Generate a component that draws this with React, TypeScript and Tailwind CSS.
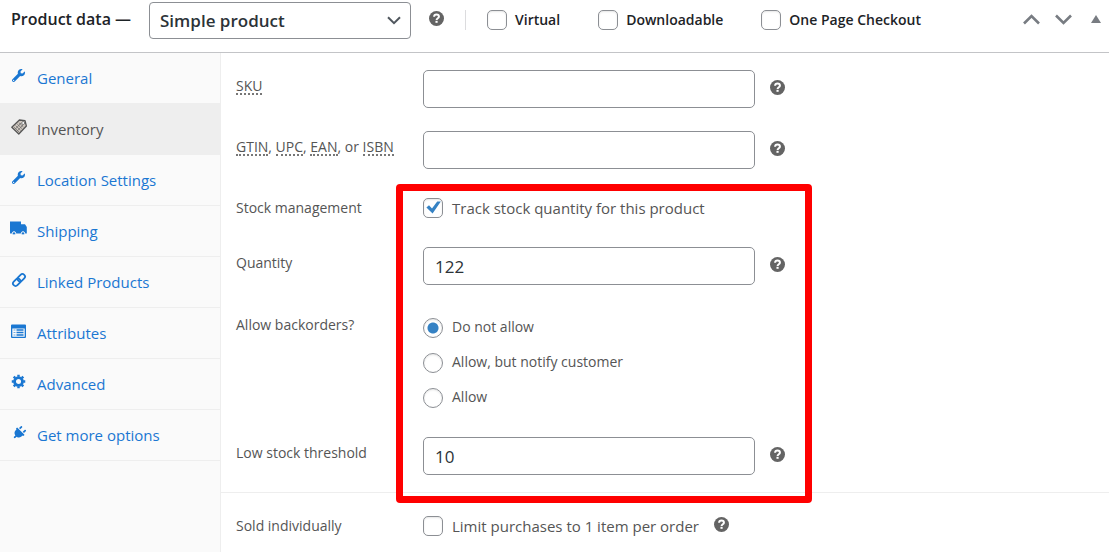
import React, { useState } from 'react';
import { FaWrench, FaPlug } from 'react-icons/fa';

const boxStyle =
  'appearance-none rounded-[5px] border border-[#8c8f94] bg-white size-5 [grid-area:1/1] shadow-[inset_0_1px_2px_rgba(0,0,0,0.1)]';
const inputStyle =
  'h-[38px] w-full max-w-[332px] rounded-[5px] border border-[#8c8f94] bg-white px-[11px] pt-px text-[17px] text-[#2c3338]';
const labelStyle = 'w-[187px] shrink-0 text-[14px] leading-5';

function Help() {
  return (
    <button type="button" aria-label="Help" className="mb-[3px] shrink-0">
      <svg viewBox="0 0 16 16" className="size-[15px]">
        <circle cx="8" cy="8" r="8" fill="#646464" />
        <path d="M5.4 6.1C5.5 4.5 6.5 3.8 8 3.8S10.6 4.6 10.6 6C10.6 7.7 8.1 7.7 8.1 9.5" fill="none" stroke="#fff" strokeWidth="2.1" />
        <rect x="6.9" y="10.5" width="2.3" height="2.1" fill="#fff" />
      </svg>
    </button>
  );
}

function CheckBox({ id, checked = false }: { id: string; checked?: boolean }) {
  const [on, setOn] = useState(checked);
  return (
    <span className="grid size-5 shrink-0 place-items-center">
      <input id={id} type="checkbox" checked={on} onChange={() => setOn(!on)} className={boxStyle} />
      {on && (
        <svg viewBox="0 0 20 20" className="pointer-events-none size-5 [grid-area:1/1]">
          <path d="M3.4 9.6 6 7.3 9 10.4 14.2 3.6 17.8 3.6 9.6 15.6Z" fill="#3582c4" />
        </svg>
      )}
    </span>
  );
}

function InventoryIcon() {
  return (
    <svg viewBox="0 0 16 16" className="size-4">
      <path d="M8.4 1 14 1.6 15.4 7 7.8 15 .8 8.2Z" fill="#d0c8c0" stroke="#555" strokeWidth="1.3" strokeLinejoin="round" />
      <path d="M3 8.2 8 13M4.6 6.6 9.6 11.4M6.2 5 11.2 9.8M7.8 3.6 12.4 8M4.2 10.2 10 4M6.2 12 12.2 5.8" stroke="#666" strokeWidth=".7" fill="none" />
      <circle cx="12.2" cy="4" r="1.5" fill="#fafafa" stroke="#555" strokeWidth=".7" />
    </svg>
  );
}

function TruckIcon() {
  return (
    <svg viewBox="0 0 17 15" className="h-[15px] w-[17px]">
      <path d="M0 .5H11V3.2H15L16.8 6V12.4H0Z" fill="currentColor" />
      <circle cx="4" cy="12.4" r="1.7" fill="currentColor" stroke="#fafafa" />
      <circle cx="13" cy="12.4" r="1.7" fill="currentColor" stroke="#fafafa" />
    </svg>
  );
}

function ChainIcon() {
  return (
    <svg viewBox="0 0 16 16" className="size-4">
      <g fill="none" stroke="currentColor" strokeWidth="1.8" transform="rotate(-45 8 8)">
        <rect x="0.6" y="5.4" width="8.4" height="5.2" rx="2.6" />
        <rect x="7" y="5.4" width="8.4" height="5.2" rx="2.6" />
      </g>
    </svg>
  );
}

function AttributesIcon() {
  return (
    <svg viewBox="0 0 15 14" className="h-[14px] w-[15px]">
      <path fillRule="evenodd" d="M1 .5H14Q15 .5 15 1.5V13Q15 14 14 14H1Q0 14 0 13V1.5Q0 .5 1 .5ZM1.3 4.5V12.7H13.7V4.5Z" fill="currentColor" />
      <path d="M2.5 6H4.5M2.5 8.5H4.5M2.5 11H4.5" stroke="currentColor" strokeWidth="1" opacity=".6" />
      <path d="M5.5 6H12.5M5.5 8.5H12.5M5.5 11H12.5" stroke="currentColor" strokeWidth="1.5" />
    </svg>
  );
}

function GearIcon() {
  return (
    <svg viewBox="0 0 16 16" className="size-[15px]">
      <circle cx="8" cy="8" r="4.2" fill="none" stroke="currentColor" strokeWidth="3" />
      <path d="M8 .8V3M8 13V15.2M.8 8H3M13 8H15.2M2.9 2.9 4.5 4.5M11.5 11.5 13.1 13.1M2.9 13.1 4.5 11.5M11.5 4.5 13.1 2.9" stroke="currentColor" strokeWidth="2.6" />
    </svg>
  );
}

const tabs = [
  { name: 'General', icon: <FaWrench className="size-[13px]" /> },
  { name: 'Inventory', icon: <InventoryIcon />, active: true },
  { name: 'Location Settings', icon: <FaWrench className="size-[13px]" /> },
  { name: 'Shipping', icon: <TruckIcon /> },
  { name: 'Linked Products', icon: <ChainIcon /> },
  { name: 'Attributes', icon: <AttributesIcon /> },
  { name: 'Advanced', icon: <GearIcon /> },
  { name: 'Get more options', icon: <FaPlug className="size-[14px] rotate-45" /> },
];

function TextRow({ id, label, value }: { id: string; label: React.ReactNode; value?: string }) {
  return (
    <div className="flex items-start">
      <label htmlFor={id} className={`${labelStyle} pt-[6px]`}>{label}</label>
      <div className="flex flex-1 items-center gap-[15px]">
        <input id={id} type="text" defaultValue={value} className={inputStyle} />
        <Help />
      </div>
    </div>
  );
}

function Abbr({ children }: { children: string }) {
  return <abbr className="border-b-2 border-dotted border-[#777] no-underline inline-block leading-[14px]">{children}</abbr>;
}

export default function App() {
  const [backorders, setBackorders] = useState('Do not allow');
  return (
    <div className="flex min-h-screen flex-col bg-white font-['Open_Sans',sans-serif] text-[#555]">
      <header className="flex h-[53px] shrink-0 items-start border-b border-[#c3c4c7] pl-[11px] pr-[6px] pt-[2px] text-[#1d2327]">
        <div className="flex h-9 items-center">
          <label htmlFor="type" className="w-[138px] pb-[2px] text-[16px] font-semibold whitespace-nowrap">Product data —</label>
          <span className="grid items-center">
            <select id="type" className="h-[37px] w-[262px] appearance-none rounded-[4px] border border-[#8c8f94] bg-white px-[10px] pt-[2px] text-[17px] font-semibold text-[#2c3338] [grid-area:1/1]">
              <option>Simple product</option>
            </select>
            <svg viewBox="0 0 14 9" className="pointer-events-none mr-[10px] h-[9px] w-[14px] justify-self-end [grid-area:1/1]">
              <path d="M1 1.2 7 7.2 13 1.2" fill="none" stroke="#50575e" strokeWidth="2" />
            </svg>
          </span>
          <span className="ml-[18px] flex"><Help /></span>
          <div className="ml-[21px] flex h-5 items-center gap-[38px] border-l border-[#dcdcde] pl-[21px] text-[14px] font-semibold">
            {['Virtual', 'Downloadable', 'One Page Checkout'].map((name) => (
              <span key={name} className="flex items-center gap-2 whitespace-nowrap">
                <CheckBox id={name} />
                <label htmlFor={name} className="pb-[2px]">{name}</label>
              </span>
            ))}
          </div>
        </div>
        <div className="ml-auto flex h-[34px] items-center gap-[15px] pr-[2px] text-[#787c82]">
          <button type="button" aria-label="Move up">
            <svg viewBox="0 0 17 11" className="h-[11px] w-[17px]"><path d="M1 9.5 8.5 2 16 9.5" fill="none" stroke="currentColor" strokeWidth="2.6" /></svg>
          </button>
          <button type="button" aria-label="Move down">
            <svg viewBox="0 0 17 11" className="h-[11px] w-[17px]"><path d="M1 1.5 8.5 9 16 1.5" fill="none" stroke="currentColor" strokeWidth="2.6" /></svg>
          </button>
          <button type="button" aria-label="Toggle panel" className="ml-1">
            <svg viewBox="0 0 10 8" className="h-2 w-[10px]"><path d="M5 0 10 8H0Z" fill="currentColor" /></svg>
          </button>
        </div>
      </header>

      <div className="flex flex-1">
        <nav className="w-[221px] shrink-0 border-r border-[#eee] bg-[#fafafa]">
          {tabs.map((t) => (
            <a
              key={t.name}
              href="#"
              className={`flex h-[51px] items-center border-b border-[#eee] pl-[10px] text-[15px] ${t.active ? 'bg-[#eee] text-[#555]' : 'text-[#1a77d2]'}`}
            >
              <span className="mb-[5px] flex w-[27px] items-center"><span className="flex w-[17px] justify-center">{t.icon}</span></span>
              {t.name}
            </a>
          ))}
        </nav>

        <main className="min-w-0 flex-1">
          <div className="flex flex-col gap-[23px] pl-[15px] pt-[17px]">
            <TextRow id="sku" label={<Abbr>SKU</Abbr>} />
            <TextRow id="gtin" label={<><Abbr>GTIN</Abbr>, <Abbr>UPC</Abbr>, <Abbr>EAN</Abbr>, or <Abbr>ISBN</Abbr></>} />
          </div>

          <section className="relative mt-[29px] flex flex-col gap-[29px] border-b border-[#eee] pb-[17px] pl-[15px]">
            <div className="flex">
              <span className={labelStyle}>Stock management</span>
              <CheckBox id="track" checked />
              <label htmlFor="track" className="pl-[9px] text-[15px] leading-5">Track stock quantity for this product</label>
            </div>
            <TextRow id="qty" label="Quantity" value="122" />
            <fieldset className="flex pt-px">
              <legend className="float-left w-[187px] text-[14px] leading-5">Allow backorders?</legend>
              <div className="flex flex-col gap-[15px] pt-[3px]">
                {['Do not allow', 'Allow, but notify customer', 'Allow'].map((name) => (
                  <label key={name} className="flex h-5 items-center gap-[9px] text-[14px]">
                    <input
                      type="radio"
                      name="backorders"
                      checked={backorders === name}
                      onChange={() => setBackorders(name)}
                      className="size-5 appearance-none rounded-full border border-[#8c8f94] bg-white shadow-[inset_0_1px_2px_rgba(0,0,0,0.1)] checked:bg-[radial-gradient(circle,#3582c4_5px,#fff_6px)]"
                    />
                    <span className="pb-[3px]">{name}</span>
                  </label>
                ))}
              </div>
            </fieldset>
            <TextRow id="low" label="Low stock threshold" value="10" />
            <div className="pointer-events-none absolute -top-[14px] -bottom-[11px] left-[175px] w-[416px] rounded-[4px] border-7 border-[#ff0000]" />
          </section>

          <div className="flex items-center pb-4 pl-[15px] pt-[23px]">
            <span className={labelStyle}>Sold individually</span>
            <CheckBox id="sold" />
            <label htmlFor="sold" className="pl-[9px] pr-[15px] text-[15px] leading-5">Limit purchases to 1 item per order</label>
            <Help />
          </div>
        </main>
      </div>
    </div>
  );
}
